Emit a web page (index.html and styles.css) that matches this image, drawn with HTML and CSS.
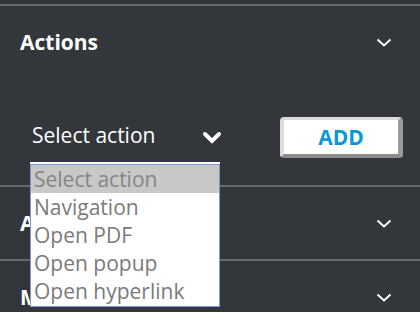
FILE: index.html
```html
<!DOCTYPE html>
<html>
<head>
<meta charset="utf-8">
<link rel="stylesheet" href="styles.css">
</head>
<body>
<div class="panel">
  <div class="prev"></div>
  <section class="sec">
    <div class="head">
      <span class="title">Actions</span>
      <svg class="chev" width="16" height="9" viewBox="0 0 16 9"><polyline points="1.5,1.5 8,7.5 14.5,1.5" fill="none" stroke="#fff" stroke-width="2"/></svg>
    </div>
    <div class="content">
      <div class="select">
        <span class="sel-label">Select action</span>
        <svg class="sel-chev" width="20" height="13" viewBox="0 0 20 13"><polyline points="3,3 10,10 17,3" fill="none" stroke="#fff" stroke-width="4" stroke-linecap="round"/></svg>
        <ul class="list">
          <li class="opt selected">Select action</li>
          <li class="opt">Navigation</li>
          <li class="opt">Open PDF</li>
          <li class="opt">Open popup</li>
          <li class="opt">Open hyperlink</li>
        </ul>
      </div>
      <button class="add">ADD</button>
    </div>
  </section>
  <section class="sec">
    <div class="head">
      <span class="title">Animations</span>
      <svg class="chev" width="16" height="9" viewBox="0 0 16 9"><polyline points="1.5,1.5 8,7.5 14.5,1.5" fill="none" stroke="#fff" stroke-width="2"/></svg>
    </div>
  </section>
  <section class="sec">
    <div class="head">
      <span class="title">More</span>
      <svg class="chev" width="16" height="9" viewBox="0 0 16 9"><polyline points="1.5,1.5 8,7.5 14.5,1.5" fill="none" stroke="#fff" stroke-width="2"/></svg>
    </div>
  </section>
</div>
</body>
</html>
```

FILE: styles.css
```css
html, body {
  margin: 0;
  padding: 0;
  background: #33373b;
  height: 312px;
  overflow: hidden;
}
.panel {
  font-family: "Open Sans", "DejaVu Sans", sans-serif;
  color: #fff;
}
.prev {
  height: 4px;
}
.sec {
  border-top: 2px solid #676b6f;
}
.head {
  height: 72px;
  display: flex;
  align-items: center;
  justify-content: space-between;
  padding: 0 28px 0 20px;
}
.title {
  font-size: 21px;
  font-weight: 700;
  line-height: normal;
}
.chev {
  display: block;
}
.content {
  height: 107px;
  box-sizing: border-box;
  padding: 39px 17px 0 30px;
  display: flex;
  align-items: flex-start;
  justify-content: space-between;
}
.select {
  position: relative;
  width: 195px;
  margin-top: 4px;
  display: flex;
  align-items: flex-start;
  justify-content: space-between;
  font-size: 21px;
  line-height: normal;
}
.sel-label {
  padding-left: 2px;
}
.sel-chev {
  display: block;
  margin-top: 10px;
  margin-right: 3px;
}
.list {
  position: absolute;
  z-index: 5;
  left: 0;
  top: 43px;
  width: 190px;
  box-sizing: border-box;
  margin: 0;
  padding: 0 0 1px 0;
  list-style: none;
  background: #fff;
  border: 1px solid #7a9bd4;
  box-shadow: 0 -2px 0 #fff;
}
.opt {
  padding-left: 3px;
  color: #7a7a7a;
  white-space: nowrap;
}
.opt.selected {
  background: #c8c8c8;
  color: #858585;
}
.add {
  width: 123px;
  height: 41px;
  box-sizing: border-box;
  border-style: solid;
  border-width: 3px 5px 4px 4px;
  border-color: #dcdcdc #999999 #8c8c8c #dcdcdc;
  border-radius: 4px;
  background: #fff;
  color: #0b97d6;
  font-family: "Open Sans", "DejaVu Sans", sans-serif;
  font-size: 21px;
  font-weight: 700;
  padding: 0;
  line-height: 1;
}
```
